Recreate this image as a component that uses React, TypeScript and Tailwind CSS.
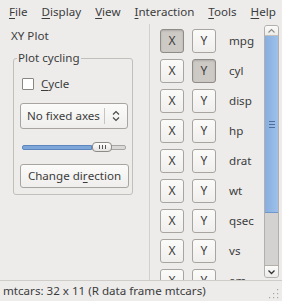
import React from 'react';

const font = { fontFamily: '"Noto Sans", "DejaVu Sans", sans-serif' };

function Mn({ children }: { children: React.ReactNode }) {
  return <span className="underline underline-offset-2 decoration-1">{children}</span>;
}

function ToggleButton({ label, pressed }: { label: string; pressed?: boolean }) {
  return (
    <div
      className={
        'w-[24px] h-[24px] rounded-[3px] border flex items-center justify-center text-[12px] text-[#3c3c3c] ' +
        (pressed
          ? 'border-[#8f8b86] bg-[#cdcac6] shadow-[inset_0_1px_2px_rgba(0,0,0,0.15)]'
          : 'border-[#a8a5a1] bg-gradient-to-b from-[#fbfbfa] to-[#efeeec]')
      }
    >
      {label}
    </div>
  );
}

const rows: { name: string; x?: boolean; y?: boolean }[] = [
  { name: 'mpg', x: true },
  { name: 'cyl', y: true },
  { name: 'disp' },
  { name: 'hp' },
  { name: 'drat' },
  { name: 'wt' },
  { name: 'qsec' },
  { name: 'vs' },
  { name: 'am' },
];

export default function App() {
  return (
    <div className="w-[282px] h-[301px] bg-[#edeceb] text-[#3c3c3c] flex flex-col overflow-hidden text-[11.6px]" style={font}>
      {/* Menu bar */}
      <div className="h-[24px] flex items-center px-[2px] shrink-0">
        <span className="px-[7px]"><Mn>F</Mn>ile</span>
        <span className="px-[7px]"><Mn>D</Mn>isplay</span>
        <span className="px-[7px]"><Mn>V</Mn>iew</span>
        <span className="px-[7px]"><Mn>I</Mn>nteraction</span>
        <span className="px-[7px]"><Mn>T</Mn>ools</span>
        <span className="px-[7px]"><Mn>H</Mn>elp</span>
      </div>

      <div className="flex flex-1 min-h-0">
        {/* Left panel */}
        <div className="w-[149px] shrink-0 flex flex-col">
          <div className="pl-[11px] h-[22px] flex items-center mt-[1px]">XY Plot</div>
          <div className="relative ml-[13px] mt-[11px] w-[120px] h-[137px] border border-[#c2bfbb] rounded-[3px] flex flex-col pl-[6px]">
            <span className="absolute left-[3px] top-[-9px] px-[1px] bg-[#edeceb] leading-[16px]">Plot cycling</span>
            <div className="flex items-center mt-[19px] ml-[2px] h-[12px]">
              <div className="w-[12px] h-[12px] border border-[#8a8783] bg-white rounded-[1px]" />
              <span className="ml-[7px]"><Mn>C</Mn>ycle</span>
            </div>
            <div className="mt-[13px] w-[108px] h-[26px] rounded-[3px] border border-[#a8a5a1] bg-gradient-to-b from-[#fbfbfa] to-[#efeeec] flex items-center">
              <span className="pl-[6px] flex-1">No fixed axes</span>
              <div className="w-px h-[16px] bg-[#c8c5c1]" />
              <svg width="20" height="16" viewBox="0 0 20 16" className="mx-[1px]">
                <path d="M7 6.5 L10 3.5 L13 6.5" fill="none" stroke="#4a4a4a" strokeWidth="1.2" />
                <path d="M7 9.5 L10 12.5 L13 9.5" fill="none" stroke="#4a4a4a" strokeWidth="1.2" />
              </svg>
            </div>
            <div className="relative mt-[13px] ml-[2px] w-[104px] h-[10px] flex items-center">
              <div className="w-[70px] h-[5px] bg-[#7da6d9] border border-[#5c86bd] rounded-l-[2px]" />
              <div className="flex-1 h-[5px] bg-[#d9d8d6] border border-[#a9a6a2] rounded-r-[2px]" />
              <div className="absolute left-[70px] top-0 w-[20px] h-[10px] rounded-[4px] border border-[#8f8b86] bg-gradient-to-b from-[#fdfdfc] to-[#e6e4e2] flex items-center justify-center gap-[2px]">
                <div className="w-px h-[4px] bg-[#555]" />
                <div className="w-px h-[4px] bg-[#555]" />
                <div className="w-px h-[4px] bg-[#555]" />
              </div>
            </div>
            <div className="mt-[12px] w-[109px] h-[24px] rounded-[3px] border border-[#a8a5a1] bg-gradient-to-b from-[#fbfbfa] to-[#efeeec] flex items-center justify-center">
              Change di<Mn>r</Mn>ection
            </div>
          </div>
        </div>

        <div className="w-px bg-[#d3d1ce] shrink-0" />

        {/* Right panel */}
        <div className="flex-1 flex min-w-0 pt-[1px]">
          <div className="flex-1 overflow-hidden flex flex-col gap-[6px] pl-[10px] pt-[4px]">
            {rows.map((r) => (
              <div key={r.name} className="flex items-center shrink-0 h-[24px]">
                <ToggleButton label="X" pressed={r.x} />
                <div className="w-[8px]" />
                <ToggleButton label="Y" pressed={r.y} />
                <span className="ml-[13px]">{r.name}</span>
              </div>
            ))}
          </div>
          {/* Scrollbar */}
          <div className="w-[15px] mr-[3px] mt-[0px] mb-[2px] flex flex-col rounded-[3px] border border-[#b3b0ac] bg-[#d3d2d0] overflow-hidden shrink-0">
            <div className="h-[10px] bg-gradient-to-b from-[#fbfbfa] to-[#ecebe9] flex items-center justify-center border-b border-[#c3c0bc]">
              <svg width="9" height="6" viewBox="0 0 9 6">
                <path d="M1.5 4.5 L4.5 1.5 L7.5 4.5" fill="none" stroke="#8a8a8a" strokeWidth="1.1" />
              </svg>
            </div>
            <div className="h-[177px] bg-gradient-to-r from-[#87aedf] to-[#9dc0ea] border-b border-[#6f97cb] flex items-center justify-center">
              <div className="flex flex-col gap-[2px]">
                <div className="w-[6px] h-px bg-[#4f6f99]" />
                <div className="w-[6px] h-px bg-[#4f6f99]" />
                <div className="w-[6px] h-px bg-[#4f6f99]" />
              </div>
            </div>
            <div className="flex-1" />
            <div className="h-[12px] bg-gradient-to-b from-[#fbfbfa] to-[#ecebe9] flex items-center justify-center border-t border-[#b3b0ac]">
              <svg width="9" height="6" viewBox="0 0 9 6">
                <path d="M1.5 1.5 L4.5 4.5 L7.5 1.5" fill="none" stroke="#333" strokeWidth="1.3" />
              </svg>
            </div>
          </div>
        </div>
      </div>

      {/* Status bar */}
      <div className="h-[21px] shrink-0 flex items-center border-t border-[#cfcdca] relative">
        <span className="pl-[3px]">mtcars: 32 x 11 (R data frame mtcars)</span>
        <svg width="12" height="12" viewBox="0 0 12 12" className="absolute right-[3px] bottom-[2px]">
          {[
            [10, 2], [10, 6], [6, 6], [10, 10], [6, 10], [2, 10],
          ].map(([x, y], i) => (
            <rect key={i} x={x} y={y} width="1.2" height="1.2" fill="#a9a6a2" />
          ))}
        </svg>
      </div>
    </div>
  );
}
